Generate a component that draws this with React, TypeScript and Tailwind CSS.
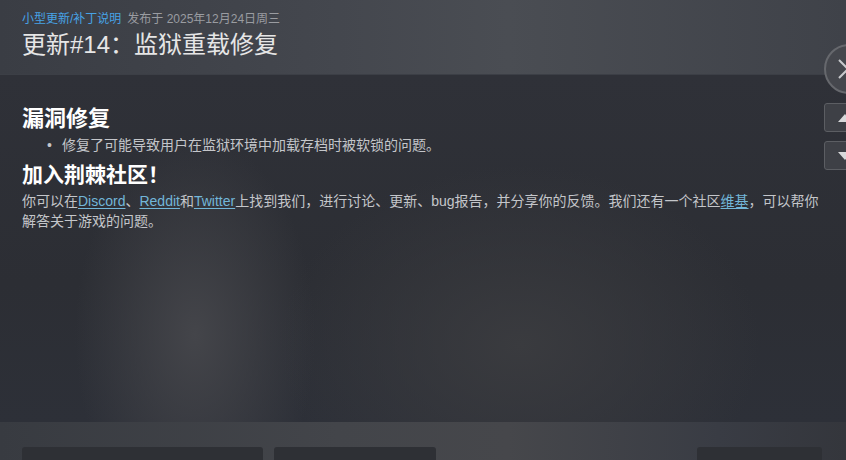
import React from "react";

const font = { fontFamily: '"Liberation Sans", "Noto Sans CJK SC", sans-serif' };

const Link = ({ children }: { children: React.ReactNode }) => (
  <a className="text-[#72b6d8] underline underline-offset-2 decoration-[#72b6d8]">{children}</a>
);

export default function App() {
  return (
    <div
      style={font}
      className="relative w-[846px] h-[460px] overflow-hidden flex flex-col bg-[#2c2e34]"
    >
      {/* header */}
      <div className="h-[75px] shrink-0 px-[22px] pt-[11px] bg-[linear-gradient(90deg,#3a3d44_0%,#44474e_40%,#4a4d53_60%,#3f4249_100%)] border-b border-[#3c3f46]">
        <div className="flex items-center gap-[6px] text-[12px] leading-[16px]">
          <span className="text-[#47a3e6]">小型更新/补丁说明</span>
          <span className="text-[#9a9ca1]">发布于 2025年12月24日周三</span>
        </div>
        <h1 className="mt-[2px] text-[24px] leading-[32px] text-[#e6e6e6]">更新#14：监狱重载修复</h1>
      </div>

      {/* body */}
      <div className="flex-1 px-[22px] pt-[29px] pr-[24px] bg-[radial-gradient(ellipse_120px_200px_at_195px_260px,#44454a_0%,transparent_100%),radial-gradient(ellipse_240px_180px_at_520px_270px,#3a3b3f_0%,transparent_100%),linear-gradient(180deg,#2f3138_0%,#2c2e34_60%,#2d3038_100%)]">
        <h2 className="text-[22px] leading-[30px] font-bold text-white">漏洞修复</h2>
        <ul className="mt-[1px] pl-[25px] text-[14px] leading-[20px] text-[#c4c6ca]">
          <li className="flex items-start">
            <span className="w-[15px] shrink-0">•</span>
            <span>修复了可能导致用户在监狱环境中加载存档时被软锁的问题。</span>
          </li>
        </ul>
        <h2 className="mt-[6px] text-[21px] leading-[28px] font-bold text-white">加入荆棘社区！</h2>
        <p className="mt-[2px] text-[14px] leading-[20px] text-[#c4c6ca]">
          你可以在<Link>Discord</Link>、<Link>Reddit</Link>和<Link>Twitter</Link>上找到我们，进行讨论、更新、bug报告，并分享你的反馈。我们还有一个社区<Link>维基</Link>，可以帮你解答关于游戏的问题。
        </p>
      </div>

      {/* bottom strip */}
      <div className="h-[38px] shrink-0 flex items-end px-[22px] gap-[11px] bg-[linear-gradient(90deg,#383b41_0%,#43454a_40%,#46474b_60%,#393c44_85%,#34363c_100%)]">
        <div className="w-[241px] h-[13px] rounded-t-[3px] bg-[#2e3035]" />
        <div className="w-[162px] h-[13px] rounded-t-[3px] bg-[#2e3035]" />
        <div className="flex-1" />
        <div className="w-[125px] h-[13px] rounded-t-[3px] bg-[#2e3035] mr-[2px]" />
      </div>

      {/* right controls */}
      <div className="absolute left-[824px] top-[44px] flex flex-col gap-[9px]">
        <div className="w-[50px] h-[50px] rounded-full bg-[#45474d] border-2 border-[#66686d] flex items-center pl-[11px]">
          <svg width="22" height="22" viewBox="0 0 22 22" stroke="#c8c9cc" strokeWidth="2" fill="none">
            <path d="M2 2 L20 20 M20 2 L2 20" />
          </svg>
        </div>
        <div className="w-[40px] h-[29px] rounded-[3px] bg-[#3e4046] border border-[#5c5e63] flex items-center pl-[13px]">
          <svg width="14" height="8" viewBox="0 0 14 8"><path d="M0 8 L7 0 L14 8 Z" fill="#d8d9db" /></svg>
        </div>
        <div className="w-[40px] h-[29px] rounded-[3px] bg-[#3e4046] border border-[#5c5e63] flex items-center pl-[13px]">
          <svg width="14" height="8" viewBox="0 0 14 8"><path d="M0 0 L14 0 L7 8 Z" fill="#d8d9db" /></svg>
        </div>
      </div>
    </div>
  );
}
